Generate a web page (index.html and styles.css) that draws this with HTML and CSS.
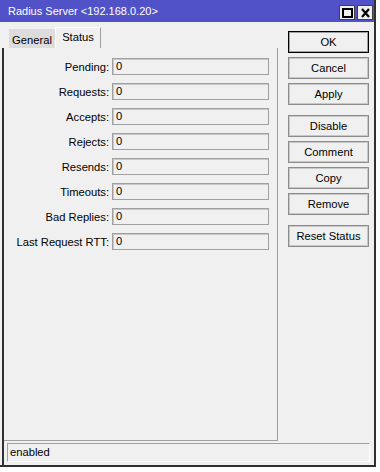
FILE: index.html
```html
<!DOCTYPE html>
<html lang="en">
<head>
    <meta charset="UTF-8">
    <title>Radius Server</title>
    <link rel="stylesheet" href="styles.css">
</head>
<body>
    <div class="window">
        <div class="titlebar">
            <span class="title">Radius Server &lt;192.168.0.20&gt;</span>
            <div class="title-buttons">
                <span class="tbtn">
                    <svg width="11" height="10" viewBox="0 0 11 10"><rect x="1" y="1" width="9" height="8" fill="none" stroke="#000" stroke-width="2"/></svg>
                </span>
                <span class="tbtn">
                    <svg width="11" height="10" viewBox="0 0 11 10"><path d="M2 1 L9 9 M9 1 L2 9" stroke="#000" stroke-width="2.2"/></svg>
                </span>
            </div>
        </div>

        <div class="client">
            <div class="upper">
                <div class="left">
                    <!-- tabs -->
                    <div class="tabs">
                        <span class="tab">General</span>
                        <span class="tab active">Status</span>
                    </div>
                    <div class="frame">
                        <div class="panel">
                            <div class="row"><label>Pending:</label><span class="field">0</span></div>
                            <div class="row"><label>Requests:</label><span class="field">0</span></div>
                            <div class="row"><label>Accepts:</label><span class="field">0</span></div>
                            <div class="row"><label>Rejects:</label><span class="field">0</span></div>
                            <div class="row"><label>Resends:</label><span class="field">0</span></div>
                            <div class="row"><label>Timeouts:</label><span class="field">0</span></div>
                            <div class="row"><label>Bad Replies:</label><span class="field">0</span></div>
                            <div class="row"><label>Last Request RTT:</label><span class="field">0</span></div>
                        </div>
                    </div>
                </div>

                <!-- side buttons -->
                <div class="side">
                    <button class="btn default">OK</button>
                    <button class="btn">Cancel</button>
                    <button class="btn">Apply</button>
                    <button class="btn group">Disable</button>
                    <button class="btn">Comment</button>
                    <button class="btn">Copy</button>
                    <button class="btn">Remove</button>
                    <button class="btn group">Reset Status</button>
                </div>
            </div>

            <div class="status-wrap">
                <div class="statusbar">enabled</div>
            </div>
        </div>
    </div>
</body>
</html>
```

FILE: styles.css
```css
/* General */
body {
    margin: 0;
    background: #fff;
    font-family: "Liberation Sans", Arial, sans-serif;
    font-size: 11.2px;
    color: #000;
}

.window {
    width: 374px;
    height: 465px;
    background: #f0f0f0;
    border-right: 2px solid #303030;
    border-bottom: 2px solid #303030;
    display: flex;
    flex-direction: column;
}

/* Title bar */
.titlebar {
    height: 22px;
    background: #5252c8;
    color: #fff;
    display: flex;
    align-items: center;
    justify-content: space-between;
    padding-left: 8px;
    padding-right: 1px;
    font-size: 11px;
}
.title-buttons {
    display: flex;
    gap: 2px;
    margin-top: 3px;
}
.tbtn {
    width: 14px;
    height: 13px;
    background: #f0f0f0;
    border: 1px solid #404040;
    display: flex;
    align-items: center;
    justify-content: center;
}

/* Client area */
.client {
    flex: 1;
    display: flex;
    flex-direction: column;
}
.upper {
    flex: 1;
    display: flex;
}
.left {
    width: 278px;
    display: flex;
    flex-direction: column;
}

/* Tabs */
.tabs {
    height: 26px;
    display: flex;
    align-items: flex-end;
    padding-left: 9px;
    box-sizing: border-box;
}
.tab {
    height: 19px;
    width: 46px;
    background: #dcdcdc;
    display: flex;
    align-items: center;
    justify-content: center;
    box-sizing: border-box;
    padding-top: 2px;
}
.tab.active {
    height: 21px;
    width: 46px;
    background: #f0f0f0;
    border-left: 1px solid #fff;
    border-top: 1px solid #fff;
    border-right: 1px solid #a0a0a0;
    padding-top: 0;
    padding-bottom: 2px;
}

/* Panel */
.frame {
    flex: 1;
    display: flex;
    border-left: 2px solid #303030;
    margin-left: 2px;
}
.panel {
    flex: 1;
    border-right: 1px solid #a0a0a0;
    border-bottom: 1px solid #a0a0a0;
    padding: 10px 0 0 0;
    display: flex;
    flex-direction: column;
    gap: 8px;
}
.row {
    display: flex;
    align-items: center;
    gap: 3px;
    height: 17px;
}
.row label {
    width: 105px;
    text-align: right;
}
.field {
    width: 157px;
    height: 17px;
    box-sizing: border-box;
    border: 1px solid #a0a0a0;
    box-shadow: inset 1px 1px 0 #c8c8c8;
    padding-left: 3px;
    line-height: 15px;
}

/* Buttons */
.side {
    flex: 1;
    display: flex;
    flex-direction: column;
    padding: 9px 0 0 10px;
    gap: 4px;
}
.btn {
    width: 81px;
    height: 22px;
    background: #f0f0f0;
    border: 1px solid #8c8c8c;
    box-shadow: inset 0 0 0 1px #c8c8c8;
    font-family: "Liberation Sans", Arial, sans-serif;
    font-size: 11.2px;
    color: #000;
    padding: 0;
}
.btn.default {
    border: 1px solid #000;
    box-shadow: inset 0 0 0 1px #a0a0a0;
}
.btn.group {
    margin-top: 6px;
}

/* Status bar */
.status-wrap {
    border-left: 2px solid #303030;
    margin-left: 2px;
    padding: 2px 4px 3px 3px;
}
.statusbar {
    height: 19px;
    box-sizing: border-box;
    border-top: 1px solid #a0a0a0;
    border-left: 1px solid #a0a0a0;
    border-right: 1px solid #fff;
    border-bottom: 1px solid #fff;
    padding-left: 2px;
    line-height: 17px;
}
```
